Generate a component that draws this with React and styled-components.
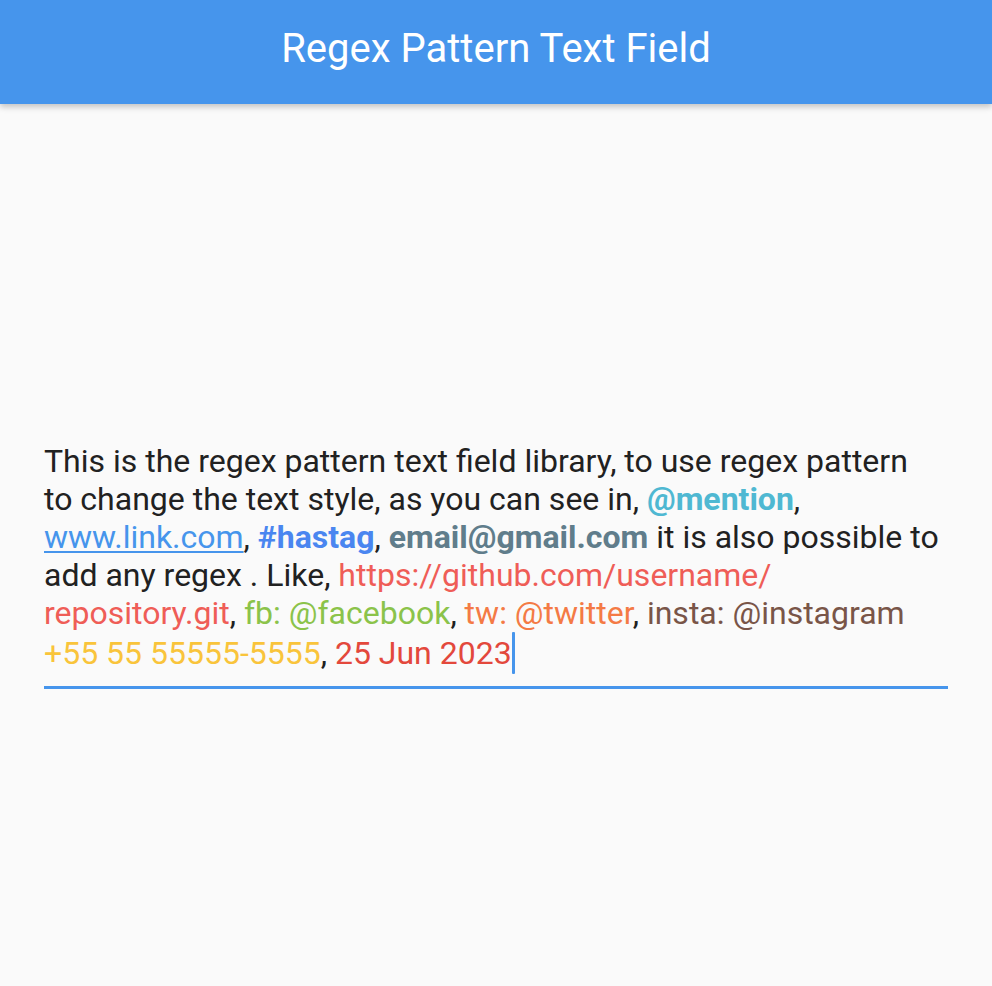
import styled, { createGlobalStyle } from 'styled-components';

const GlobalStyle = createGlobalStyle`
  html, body {
    margin: 0;
    padding: 0;
    background: #fafafa;
  }
  body {
    font-family: Roboto, "Noto Sans", sans-serif;
  }
`;

const Page = styled.div`
  display: flex;
  flex-direction: column;
  height: 986px;
  background: #fafafa;
`;

const AppBar = styled.header`
  height: 104px;
  box-sizing: border-box;
  padding-bottom: 8px;
  flex-shrink: 0;
  background: #4695ec;
  display: flex;
  align-items: center;
  justify-content: center;
  box-shadow: 0 3px 6px rgba(0, 0, 0, 0.22);
  position: relative;
  z-index: 1;
`;

const Title = styled.h1`
  margin: 0;
  color: #fff;
  font-weight: 400;
  font-size: 40px;
  line-height: 47px;
`;

const Body = styled.main`
  flex: 1;
  display: flex;
  align-items: center;
  padding: 39px 44px 0;
`;

const Field = styled.div`
  width: 100%;
  border-bottom: 3px solid #4695ec;
  padding: 2px 0 12px;
`;

const Text = styled.p`
  margin: 0;
  color: #212121;
  font-size: 32px;
  line-height: 38px;
`;

const Token = styled.span`
  color: ${(p) => p.$color};
  font-weight: ${(p) => (p.$bold ? 700 : 400)};
  text-decoration: ${(p) => (p.$underline ? 'underline' : 'none')};
  text-decoration-thickness: 2px;
  text-underline-offset: 3px;
`;

const Caret = styled.span`
  display: inline-block;
  width: 3px;
  height: 42px;
  background: #4695ec;
  border-radius: 1px;
  vertical-align: -10px;
`;

export default function App() {
  return (
    <>
      <GlobalStyle />
      <Page>
        <AppBar>
          <Title>Regex Pattern Text Field</Title>
        </AppBar>
        <Body>
          <Field>
            <Text>
              This is the regex pattern text field library, to use regex pattern
              <br />
              to change the text style, as you can see in,{' '}
              <Token $color="#4fb8d2" $bold>@mention</Token>,{' '}
              <Token $color="#4695ec" $underline>www.link.com</Token>,{' '}
              <Token $color="#4a86f0" $bold>#hastag</Token>,{' '}
              <Token $color="#607d8b" $bold>email@gmail.com</Token> it is also
              possible to add any regex . Like,{' '}
              <Token $color="#ef5d57">
                https://github.com/username/<wbr />repository.git
              </Token>,{' '}
              <Token $color="#8bc34a">fb: @facebook</Token>,{' '}
              <Token $color="#f47a45">tw: @twitter</Token>,{' '}
              <Token $color="#795548">insta: @instagram</Token>{' '}
              <Token $color="#f9c43b">+55 55 55555-5555</Token>,{' '}
              <Token $color="#e3483c">25 Jun 2023</Token>
              <Caret />
            </Text>
          </Field>
        </Body>
      </Page>
    </>
  );
}
